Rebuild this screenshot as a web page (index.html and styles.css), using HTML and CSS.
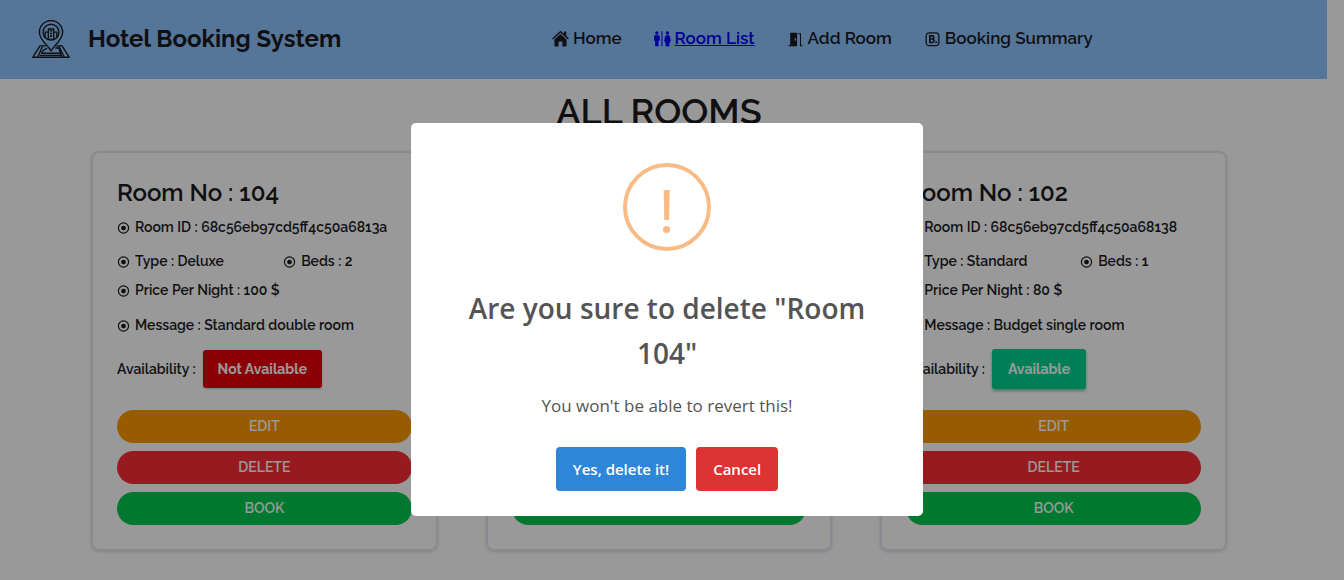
FILE: index.html
```html
<!DOCTYPE html>
<html lang="en">
<head>
<meta charset="utf-8">
<meta name="viewport" content="width=device-width, initial-scale=1">
<title>Hotel Booking System</title>
<link rel="stylesheet" href="styles.css">
</head>
<body>
<svg class="defs" aria-hidden="true">
  <symbol id="bullet" viewBox="0 0 12 12">
    <circle cx="6" cy="6.500" r="4.700" fill="none" stroke="currentColor" stroke-width="1.100"/>
    <circle cx="6" cy="6.500" r="2.200" fill="currentColor"/>
  </symbol>
</svg>

<header class="navbar">
  <div class="brand">
    <svg class="brand-logo" viewBox="0 0 36 36" fill="none" stroke="currentColor" stroke-width="1.3" stroke-linejoin="round" aria-hidden="true">
      <path d="M18 29.500C16.500 25 7 19.500 7 11.500a11 11 0 0 1 22 0C29 19.500 19.500 25 18 29.500z"/>
      <circle cx="18" cy="11.500" r="7.500"/>
      <path d="M15.500 18.500v-10h5v10M12.500 17v-5.500h3M23.500 17v-5.500h-3"/>
      <path d="M18 9.500v8" stroke-width="2" stroke-dasharray="1.500 1"/>
      <path d="M13 24.500H7.500L.7 35.300h34.600L28.500 24.500H23"/>
      <path d="M10 25l-4.500 10M14.500 26.500L11 28.500 9 31M25.500 25l5 10M22 26.500h3.500L28 35M8.500 31.500h19M7.500 33.500h21"/>
    </svg>
    <span class="brand-name">Hotel Booking System</span>
  </div>
  <nav class="nav-links">
    <a class="nav-link" href="#home">
      <svg class="nav-icon" viewBox="0 0 16 16" fill="currentColor" aria-hidden="true">
        <path d="M8 .6L.1 7.900l.9 1L8 2.500l7 6.400.9-1L13.500 5.700V1.300h-2.300v2.300z"/>
        <path d="M8 3.800L2.300 9v5.600q0 .9.900.9h3v-4.700h3.600v4.700h3q.9 0 .9-.9V9z"/>
      </svg>
      <span class="nav-text">Home</span>
    </a>
    <a class="nav-link nav-link-active" href="#rooms">
      <svg class="nav-icon" viewBox="0 0 16 16" fill="currentColor" aria-hidden="true">
        <circle cx="2.700" cy="2.800" r="1.600"/>
        <path d="M.9 5h3.600q.9 0 .9 1v4H4.300v5.200H1.100V10H0V6q0-1 .9-1z"/>
        <path d="M7 1.200h1v14H7z"/>
        <circle cx="12.700" cy="2.800" r="1.600"/>
        <path d="M11.400 5H14q.5 0 .7.600L16 10.300l-.9.500h-.4l.7 1.200h-1v3.200H11V12h-1l.7-1.200h-.4l-.9-.5 1.300-4.700q.2-.6.7-.6z"/>
      </svg>
      <span class="nav-text">Room List</span>
    </a>
    <a class="nav-link" href="#add">
      <svg class="nav-icon" viewBox="0 0 16 16" fill="currentColor" aria-hidden="true">
        <path fill-rule="evenodd" d="M3 2.500h6.500v12.700H1.500v-1H3zM7.300 7.800v2h1.200v-2z"/>
        <path d="M10.200 3h3v11.200h1.200v1h-2.200V4h-2z"/>
      </svg>
      <span class="nav-text">Add Room</span>
    </a>
    <a class="nav-link" href="#summary">
      <svg class="nav-icon" viewBox="0 0 16 16" fill="none" stroke="currentColor" stroke-width="1.200" aria-hidden="true">
        <rect x="2" y="2.700" width="12" height="12" rx="3"/>
        <path stroke-width="1.500" d="M5.500 5.500h2.200q1.500 0 1.500 1.500T7.700 8.500H5.500zM5.500 8.500h2.400q1.600 0 1.600 1.600t-1.600 1.600H5.500z"/>
        <circle cx="11.500" cy="11.500" r=".9" fill="currentColor" stroke="none"/>
      </svg>
      <span class="nav-text">Booking Summary</span>
    </a>
  </nav>
</header>

<main class="page">
  <h1 class="page-title">ALL ROOMS</h1>
  <div class="rooms">
    <article class="card">
      <h2 class="room-name">Room No : 104</h2>
      <p class="fact"><svg class="bullet"><use href="#bullet"/></svg>Room ID : 68c56eb97cd5ff4c50a6813a</p>
      <div class="fact-group">
        <div class="fact-pair">
          <p class="fact"><svg class="bullet"><use href="#bullet"/></svg>Type : Deluxe</p>
          <p class="fact"><svg class="bullet"><use href="#bullet"/></svg>Beds : 2</p>
        </div>
        <p class="fact"><svg class="bullet"><use href="#bullet"/></svg>Price Per Night : 100 $</p>
      </div>
      <p class="fact"><svg class="bullet"><use href="#bullet"/></svg>Message : Standard double room</p>
      <div class="availability">Availability : <button class="status status-off" type="button">Not Available</button></div>
      <div class="actions">
        <button class="action action-edit" type="button">EDIT</button>
        <button class="action action-delete" type="button">DELETE</button>
        <button class="action action-book" type="button">BOOK</button>
      </div>
    </article>
    <article class="card">
      <div class="actions">
        <button class="action action-book" type="button">BOOK</button>
      </div>
    </article>
    <article class="card">
      <h2 class="room-name">Room No : 102</h2>
      <p class="fact"><svg class="bullet"><use href="#bullet"/></svg>Room ID : 68c56eb97cd5ff4c50a68138</p>
      <div class="fact-group">
        <div class="fact-pair">
          <p class="fact"><svg class="bullet"><use href="#bullet"/></svg>Type : Standard</p>
          <p class="fact"><svg class="bullet"><use href="#bullet"/></svg>Beds : 1</p>
        </div>
        <p class="fact"><svg class="bullet"><use href="#bullet"/></svg>Price Per Night : 80 $</p>
      </div>
      <p class="fact"><svg class="bullet"><use href="#bullet"/></svg>Message : Budget single room</p>
      <div class="availability">Availability : <button class="status status-on" type="button">Available</button></div>
      <div class="actions">
        <button class="action action-edit" type="button">EDIT</button>
        <button class="action action-delete" type="button">DELETE</button>
        <button class="action action-book" type="button">BOOK</button>
      </div>
    </article>
  </div>
</main>

<div class="overlay">
  <div class="dialog" role="dialog" aria-modal="true" aria-labelledby="dialog-title">
    <svg class="dialog-icon" viewBox="0 0 88 88" aria-hidden="true">
      <circle cx="44" cy="44" r="42" fill="none" stroke="currentColor" stroke-width="4"/>
      <path fill="currentColor" d="M40.700 27h6l-.6 30h-4.800z"/>
      <circle cx="43.500" cy="66.500" r="3.600" fill="currentColor"/>
    </svg>
    <h2 class="dialog-title" id="dialog-title">Are you sure to delete "Room 104"</h2>
    <p class="dialog-text">You won't be able to revert this!</p>
    <div class="dialog-actions">
      <button class="dialog-button dialog-confirm" type="button">Yes, delete it!</button>
      <button class="dialog-button dialog-cancel" type="button">Cancel</button>
    </div>
  </div>
</div>
</body>
</html>
```
FILE: styles.css
```css
* {
  box-sizing: border-box;
}

body {
  margin: 0;
  padding-right: 17px;
  min-height: 100vh;
  overflow: hidden;
  background: #fff;
  color: #1b1b1f;
  font-family: Raleway, Lato, sans-serif;
  font-weight: 600;
}

h1, h2, p {
  margin: 0;
  font-weight: inherit;
}

button {
  border: 0;
  font-family: inherit;
  cursor: pointer;
}

.defs {
  display: none;
}

.navbar {
  display: grid;
  grid-template-columns: 520px 1fr;
  align-items: center;
  padding: 19px 32px 20px;
  background: #8ec5ff;
}

.brand {
  display: flex;
  align-items: center;
  gap: 18px;
}

.brand-logo {
  width: 38px;
  height: 38px;
}

.brand-name {
  font-size: 24px;
  line-height: 40px;
  font-weight: 700;
}

.nav-links {
  display: flex;
  gap: 32px;
  padding-bottom: 2px;
}

.nav-link {
  display: flex;
  align-items: center;
  gap: 4px;
  color: inherit;
  font-size: 17px;
  line-height: 24px;
  text-decoration: none;
}

.nav-icon {
  width: 17px;
  height: 17px;
}

.nav-link-active {
  color: #00f;
}

.nav-link-active .nav-text {
  text-decoration: underline;
}

.page {
  padding: 12px 100px 28px 91px;
}

.page-title {
  margin-bottom: 20px;
  font-size: 36px;
  line-height: 40px;
  text-align: center;
}

.rooms {
  display: grid;
  grid-template-columns: repeat(3, minmax(0, 1fr));
  gap: 48px;
}

.card {
  display: flex;
  flex-direction: column;
  gap: 14px;
  padding: 24px;
  border: 2px solid #e2e8f0;
  border-radius: 8px;
  box-shadow: 0 1px 3px rgba(0, 0, 0, 0.15);
  font-size: 14px;
  line-height: 20px;
}

.room-name {
  margin-bottom: -6px;
  font-size: 24px;
  line-height: 32px;
}

.fact {
  display: flex;
  align-items: center;
  gap: 5px;
}

.bullet {
  width: 13px;
  height: 13px;
  flex: none;
}

.fact-group {
  display: grid;
  gap: 9px;
  padding-bottom: 1px;
}

.fact-pair {
  display: grid;
  grid-template-columns: auto auto;
}

.availability {
  display: flex;
  align-items: center;
  gap: 7px;
  height: 40px;
}

.status {
  border-radius: 3px;
  color: #fff;
  font-size: 14px;
  line-height: 20px;
  font-weight: 700;
}

.status-off {
  padding: 9px 15px;
  background: #e7000b;
  box-shadow: 0 1px 2px rgba(0, 0, 0, 0.2);
}

.status-on {
  padding: 10px 16px;
  background: #00d492;
  box-shadow: 0 2px 3px rgba(0, 140, 95, 0.5);
}

.actions {
  display: grid;
  gap: 8px;
  margin-top: auto;
  padding-top: 7px;
}

.action {
  padding: 6px 16px 7px;
  border-radius: 17px;
  color: #fff;
  font-size: 14px;
  line-height: 20px;
  font-weight: 600;
}

.action-edit {
  background: #fe9a00;
}

.action-delete {
  background: #fb2c36;
}

.action-book {
  background: #00c950;
}

.overlay {
  position: fixed;
  inset: 0;
  display: flex;
  justify-content: center;
  align-items: flex-start;
  padding: 123px 10px 0 0;
  background: rgba(0, 0, 0, 0.4);
}

.dialog {
  display: flex;
  flex-direction: column;
  align-items: center;
  width: 512px;
  max-width: 100%;
  padding: 40px 16px 25px;
  border-radius: 5px;
  background: #fff;
  color: #545454;
  font-family: "Segoe UI", "Open Sans", sans-serif;
  text-align: center;
}

.dialog-icon {
  width: 88px;
  height: 88px;
  color: #f8bb86;
}

.dialog-title {
  margin-top: 35px;
  padding: 0 32px;
  font-size: 28px;
  line-height: 45px;
  font-weight: 600;
}

.dialog-text {
  margin-top: 16px;
  font-size: 17px;
  line-height: 27px;
  font-weight: 400;
}

.dialog-actions {
  display: flex;
  gap: 10px;
  margin-top: 28px;
}

.dialog-button {
  padding: 10px 17px;
  border-radius: 4px;
  color: #fff;
  font-size: 15px;
  line-height: 24px;
  font-weight: 600;
}

.dialog-confirm {
  background: #2f86d9;
}

.dialog-cancel {
  background: #dd3333;
}
```
